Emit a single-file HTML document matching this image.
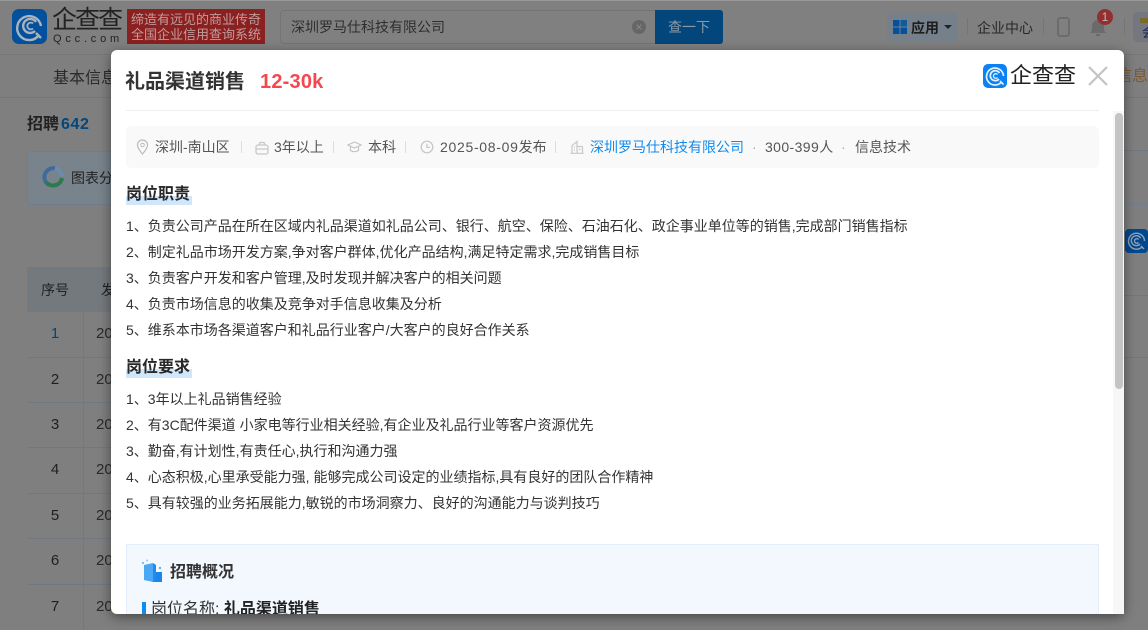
<!DOCTYPE html>
<html><head><meta charset="utf-8"><style>
*{box-sizing:border-box;margin:0;padding:0}
html,body{width:1148px;height:630px;overflow:hidden;background:#7f7f7f}
body{position:relative;font-family:"Liberation Sans","Noto Sans CJK SC",sans-serif;color:#333}
.a{position:absolute;white-space:nowrap}
.t{font-size:14px;line-height:26px;left:126px;color:#333;position:absolute;white-space:nowrap}
.h{position:absolute;left:126px;font-size:16px;font-weight:700;line-height:24px;color:#282828;white-space:nowrap}
.hl{position:absolute;left:126px;width:66px;height:9px;background:#cfe6fb}
.m{position:absolute;top:137px;font-size:14px;line-height:20px;color:#555;white-space:nowrap}
.s{position:absolute;top:141px;width:1px;height:12px;background:#ddd}
.row{position:absolute;left:27px;width:84px;height:1px;background:#717880}
.n{position:absolute;left:27px;width:56px;text-align:center;font-size:15px;line-height:18px;color:#1f1f1f}
.y{position:absolute;left:96px;font-size:15px;line-height:18px;color:#2a2a2a}
</style></head><body>
<!-- dimmed page -->
<div class="a" style="left:0;top:0;width:1148px;height:55px;background:#808080;border-top:1px solid #999;border-bottom:1px solid #777"></div>
<svg class="a" style="left:12px;top:9px" width="35" height="35" viewBox="0 0 35 35"><rect width="35" height="35" rx="7" fill="#03509c"/><g fill="none" stroke="#a9b3bd" stroke-width="2.4"><path d="M27 26A12 12 0 1 1 29 17"/><path d="M23 22A7 7 0 1 1 24 13"/></g><path d="M21 19.500A3.400 3.400 0 1 1 21 14.500" fill="none" stroke="#a9b3bd" stroke-width="1.800"/><path d="M24 24l5 5" stroke="#a9b3bd" stroke-width="2.400"/></svg>
<div class="a" style="left:52px;top:5px;font-size:25px;line-height:30px;color:#222;letter-spacing:-2px">企查查</div>
<div class="a" style="left:53px;top:33px;font-size:11px;line-height:12px;color:#222;letter-spacing:3.800px">Qcc.com</div>
<div class="a" style="left:127px;top:9px;width:138px;height:35px;background:#8a2020;color:#c29b9b;font-size:13px;line-height:15px;text-align:center;padding-top:3px">缔造有远见的商业传奇<br>全国企业信用查询系统</div>
<div class="a" style="left:280px;top:10px;width:376px;height:34px;border:1px solid #747474;border-radius:4px 0 0 4px;font-size:14px;line-height:33px;padding-left:10px;color:#2e2e2e">深圳罗马仕科技有限公司</div>
<div class="a" style="left:632px;top:20px;width:14px;height:14px;border-radius:50%;background:#666;color:#8a8a8a;font-size:12px;line-height:14px;text-align:center">×</div>
<div class="a" style="left:655px;top:10px;width:68px;height:34px;background:#03467c;border-radius:0 3px 3px 0;color:#8a99a8;font-size:14px;line-height:34px;text-align:center">查一下</div>
<div class="a" style="left:887px;top:13px;width:70px;height:28px;background:#75808b;border-radius:4px"></div>
<svg class="a" style="left:893px;top:20px" width="14" height="14"><rect width="6.500" height="6.500" fill="#03509c"/><rect x="7.500" width="6.500" height="6.500" fill="#0b5d9f"/><rect y="7.500" width="6.500" height="6.500" fill="#03509c"/><rect x="7.500" y="7.500" width="6.500" height="6.500" fill="#03509c"/></svg>
<div class="a" style="left:911px;top:18px;font-size:14px;line-height:20px;font-weight:700;color:#1e1e1e">应用</div>
<div class="a" style="left:944px;top:25px;border:4px solid transparent;border-top:4px solid #222;border-bottom:0"></div>
<div class="a" style="left:967px;top:18px;width:1px;height:17px;background:#757575"></div>
<div class="a" style="left:977px;top:18px;font-size:14px;line-height:20px;color:#282828">企业中心</div>
<div class="a" style="left:1043px;top:18px;width:1px;height:17px;background:#757575"></div>
<div class="a" style="left:1057px;top:17px;width:13px;height:20px;border:2px solid #6c6c6c;border-radius:3px"></div>
<svg class="a" style="left:1089px;top:16px" width="18" height="22"><path d="M1 17c2-2 2-4 2-7 0-3 2-6 6-6s6 3 6 6c0 3 0 5 2 7z" fill="#6b6b6b"/><rect x="7" y="18" width="4" height="2" fill="#6b6b6b"/></svg>
<div class="a" style="left:1097px;top:9px;width:16px;height:16px;border-radius:50%;background:#922f2f;color:#bbb;font-size:12px;line-height:16px;text-align:center">1</div>
<div class="a" style="left:1124px;top:18px;width:1px;height:17px;background:#757575"></div>
<div class="a" style="left:1133px;top:12px;width:15px;height:30px;background:#74777f;border-radius:4px 0 0 4px;overflow:hidden"><div class="a" style="left:9px;top:13px;font-size:13px;line-height:16px;color:#1c2350">会</div><div class="a" style="left:7px;top:6px;width:8px;height:5px;background:#7a6a2c"></div></div>
<div class="a" style="left:53px;top:68px;font-size:16px;line-height:22px;color:#2a2a2a">基本信息</div>
<div class="a" style="left:1116px;top:66px;font-size:16px;line-height:22px;color:#7e5a30">信息</div>
<div class="a" style="left:0;top:97px;width:1148px;height:1px;background:#777"></div>
<div class="a" style="left:27px;top:114px;font-size:16px;line-height:22px;font-weight:700;color:#222">招聘<span style="color:#03467c;margin-left:2px;letter-spacing:.6px">642</span></div>
<div class="a" style="left:27px;top:151px;width:90px;height:54px;border:1px solid #6d7f8f;border-radius:4px;background:#78838c"></div>
<svg class="a" style="left:42px;top:166px" width="22" height="22" viewBox="0 0 22 22"><path d="M7 19A9 9 0 0 1 13 2.300" fill="none" stroke="#3f6a9c" stroke-width="4"/><path d="M4 16A9 9 0 0 0 20 12" fill="none" stroke="#2c7a4e" stroke-width="4"/><path d="M13 2.300A9 9 0 0 1 20 10" fill="none" stroke="#6f8ab0" stroke-width="4"/></svg>
<div class="a" style="left:71px;top:168px;font-size:14px;line-height:20px;color:#222">图表分</div>
<div class="a" style="left:27px;top:267px;width:90px;height:44px;background:#74797d"></div>
<div class="a" style="left:41px;top:280px;font-size:14px;line-height:20px;color:#222">序号</div>
<div class="a" style="left:101px;top:280px;font-size:14px;line-height:20px;color:#222">发</div>
<div class="a" style="left:83px;top:267px;width:1px;height:363px;background:#737980"></div>
<div class="row" style="top:311px"></div><div class="row" style="top:357px"></div><div class="row" style="top:402px"></div><div class="row" style="top:447px"></div><div class="row" style="top:493px"></div><div class="row" style="top:538px"></div><div class="row" style="top:584px"></div>
<div class="n" style="top:325px;color:#03467c">1</div><div class="n" style="top:371px">2</div><div class="n" style="top:416px">3</div><div class="n" style="top:461px">4</div><div class="n" style="top:507px">5</div><div class="n" style="top:552px">6</div><div class="n" style="top:598px">7</div>
<div class="y" style="top:325px">20</div><div class="y" style="top:371px">20</div><div class="y" style="top:416px">20</div><div class="y" style="top:461px">20</div><div class="y" style="top:507px">20</div><div class="y" style="top:552px">20</div><div class="y" style="top:598px">20</div>
<div class="a" style="left:1124px;top:150px;width:24px;height:1px;background:#717880"></div>
<div class="a" style="left:1124px;top:204px;width:24px;height:1px;background:#6f7f90"></div>
<div class="a" style="left:1124px;top:295px;width:24px;height:1px;background:#717880"></div>
<div class="a" style="left:1124px;top:357px;width:24px;height:1px;background:#717880"></div>
<svg class="a" style="left:1125px;top:229px" width="23" height="24" viewBox="0 0 23 24"><rect width="23" height="24" rx="4" fill="#03478c"/><g fill="none" stroke="#8fa3b8" stroke-width="1.400"><path d="M17 18A8 8 0 1 1 19.500 12"/><path d="M15 15A5 5 0 1 1 15.500 9"/><path d="M13.500 13.500A2.300 2.300 0 1 1 13.500 10.500"/><path d="M16 17l3 3"/></g></svg>
<!-- modal -->
<div class="a" style="left:111px;top:50px;width:1013px;height:564px;background:#fff;border-radius:6px;box-shadow:0 3px 12px rgba(0,0,0,.45);overflow:hidden">
</div>
<div class="a" style="left:125px;top:68px;font-size:20px;line-height:28px;font-weight:700;color:#333">礼品渠道销售</div>
<div class="a" style="left:260px;top:68px;font-size:20px;line-height:28px;font-weight:700;color:#f5474d;letter-spacing:.2px">12-30k</div>
<svg class="a" style="left:983px;top:64px" width="24" height="24" viewBox="0 0 24 24"><rect width="24" height="24" rx="5" fill="#0a82f5"/><g fill="none" stroke="#e4f1fd" stroke-width="1.700"><path d="M18.500 18A8.500 8.500 0 1 1 20.500 12"/><path d="M16 15A5 5 0 1 1 16.500 9"/></g><path d="M14.500 13.500A2.300 2.300 0 1 1 14.500 10.500" fill="none" stroke="#e4f1fd" stroke-width="1.300"/><path d="M17 17l3.500 3.500" stroke="#e4f1fd" stroke-width="1.700"/></svg>
<div class="a" style="left:1010px;top:60px;font-size:22px;line-height:31px;color:#222">企查查</div>
<svg class="a" style="left:1088px;top:66px" width="20" height="20"><path d="M1 1L19 19M19 1L1 19" stroke="#c4c4c4" stroke-width="2.200"/></svg>
<div class="a" style="left:126px;top:110px;width:973px;height:1px;background:#eee"></div>
<div class="a" style="left:1113px;top:111px;width:11px;height:503px;background:#f7f7f7"></div>
<div class="a" style="left:1115px;top:113px;width:8px;height:276px;background:#c4c4c4;border-radius:4px"></div>
<div class="a" style="left:126px;top:126px;width:973px;height:42px;background:#f9f9f9;border-radius:5px"></div>
<svg class="a" style="left:136px;top:139px" width="13" height="16" viewBox="0 0 13 16"><path d="M6.500 15C3 11 1.500 8.500 1.500 6a5 5 0 0 1 10 0c0 2.500-1.500 5-5 9z" fill="none" stroke="#bbb" stroke-width="1.200"/><circle cx="6.500" cy="6" r="1.800" fill="none" stroke="#bbb"/></svg>
<div class="m" style="left:155px">深圳-南山区</div><div class="s" style="left:241px"></div>
<svg class="a" style="left:255px;top:141px" width="14" height="14" viewBox="0 0 14 14"><rect x="1" y="4" width="12" height="9" rx="2" fill="none" stroke="#c8c8c8" stroke-width="1.300"/><path d="M4.500 4V2.500a1 1 0 0 1 1-1h3a1 1 0 0 1 1 1V4M1 8h12" fill="none" stroke="#c8c8c8" stroke-width="1.300"/></svg>
<div class="m" style="left:274px">3年以上</div><div class="s" style="left:333px"></div>
<svg class="a" style="left:347px;top:140px" width="15" height="14" viewBox="0 0 15 14"><path d="M.8 5L7.500 2l6.700 3-6.700 3zM3.500 6.500v4c2.500 1.500 5.500 1.500 8 0v-4" fill="none" stroke="#c4c4c4" stroke-width="1.200"/></svg>
<div class="m" style="left:368px">本科</div><div class="s" style="left:405px"></div>
<svg class="a" style="left:420px;top:140px" width="14" height="14" viewBox="0 0 14 14"><circle cx="7" cy="7" r="5.800" fill="none" stroke="#c4c4c4" stroke-width="1.200"/><path d="M7 3.800V7.300H10" fill="none" stroke="#c4c4c4" stroke-width="1.200"/></svg>
<div class="m" style="left:440px"><span style="letter-spacing:.7px">2025-08-09</span>发布</div><div class="s" style="left:555px"></div>
<svg class="a" style="left:570px;top:140px" width="14" height="14" viewBox="0 0 14 14"><path d="M.5 13.300H13.500M2 13V5.500L7 1.500V13M7 6.500h4.500a1 1 0 0 1 1 1V13M4 7h1M4 10h1M9 9.500h1.500" fill="none" stroke="#c8c8c8" stroke-width="1.200"/></svg>
<div class="m" style="left:590px;color:#128bed">深圳罗马仕科技有限公司</div>
<div class="m" style="left:752px;color:#aaa">·</div>
<div class="m" style="left:765px"><span style="letter-spacing:.4px">300-399</span>人</div>
<div class="m" style="left:841px;color:#aaa">·</div>
<div class="m" style="left:855px">信息技术</div>

<div class="hl" style="top:196px"></div><div class="h" style="top:183px">岗位职责</div>
<div class="t" style="top:213px">1、负责公司产品在所在区域内礼品渠道如礼品公司、银行、航空、保险、石油石化、政企事业单位等的销售,完成部门销售指标</div>
<div class="t" style="top:239px">2、制定礼品市场开发方案,争对客户群体,优化产品结构,满足特定需求,完成销售目标</div>
<div class="t" style="top:265px">3、负责客户开发和客户管理,及时发现并解决客户的相关问题</div>
<div class="t" style="top:291px">4、负责市场信息的收集及竞争对手信息收集及分析</div>
<div class="t" style="top:317px">5、维系本市场各渠道客户和礼品行业客户/大客户的良好合作关系</div>
<div class="hl" style="top:369px"></div><div class="h" style="top:356px">岗位要求</div>
<div class="t" style="top:386px">1、3年以上礼品销售经验</div>
<div class="t" style="top:412px">2、有3C配件渠道 小家电等行业相关经验,有企业及礼品行业等客户资源优先</div>
<div class="t" style="top:438px">3、勤奋,有计划性,有责任心,执行和沟通力强</div>
<div class="t" style="top:464px">4、心态积极,心里承受能力强, 能够完成公司设定的业绩指标,具有良好的团队合作精神</div>
<div class="t" style="top:490px">5、具有较强的业务拓展能力,敏锐的市场洞察力、良好的沟通能力与谈判技巧</div>

<div class="a" style="left:126px;top:544px;width:973px;height:70px;background:#f3f8fe;border:1px solid #e3eefa;border-bottom:0;overflow:hidden"></div>
<svg class="a" style="left:141px;top:559px" width="22" height="24" viewBox="0 0 22 24"><path d="M3 6l9-2v19l-9-2z" fill="#4aa8f5"/><path d="M12 4l3 2v17l-3 0z" fill="#1f8bee"/><rect x="15" y="13" width="6" height="10" fill="#1a86ea"/><circle cx="2" cy="4" r="1" fill="#5ab4f7"/><circle cx="19" cy="9" r="1.200" fill="#5ab4f7"/><circle cx="6" cy="1.500" r="1" fill="#8accfa"/></svg>
<div class="a" style="left:170px;top:562px;font-size:16px;line-height:22px;font-weight:700;color:#333">招聘概况</div>
<div class="a" style="left:142px;top:602px;width:4px;height:12px;background:#128bed"></div>
<div class="a" style="left:151px;top:599px;height:15px;width:300px;overflow:hidden;font-size:16px;line-height:22px;color:#333">岗位名称: <b style="color:#222">礼品渠道销售</b></div>
</body></html>
